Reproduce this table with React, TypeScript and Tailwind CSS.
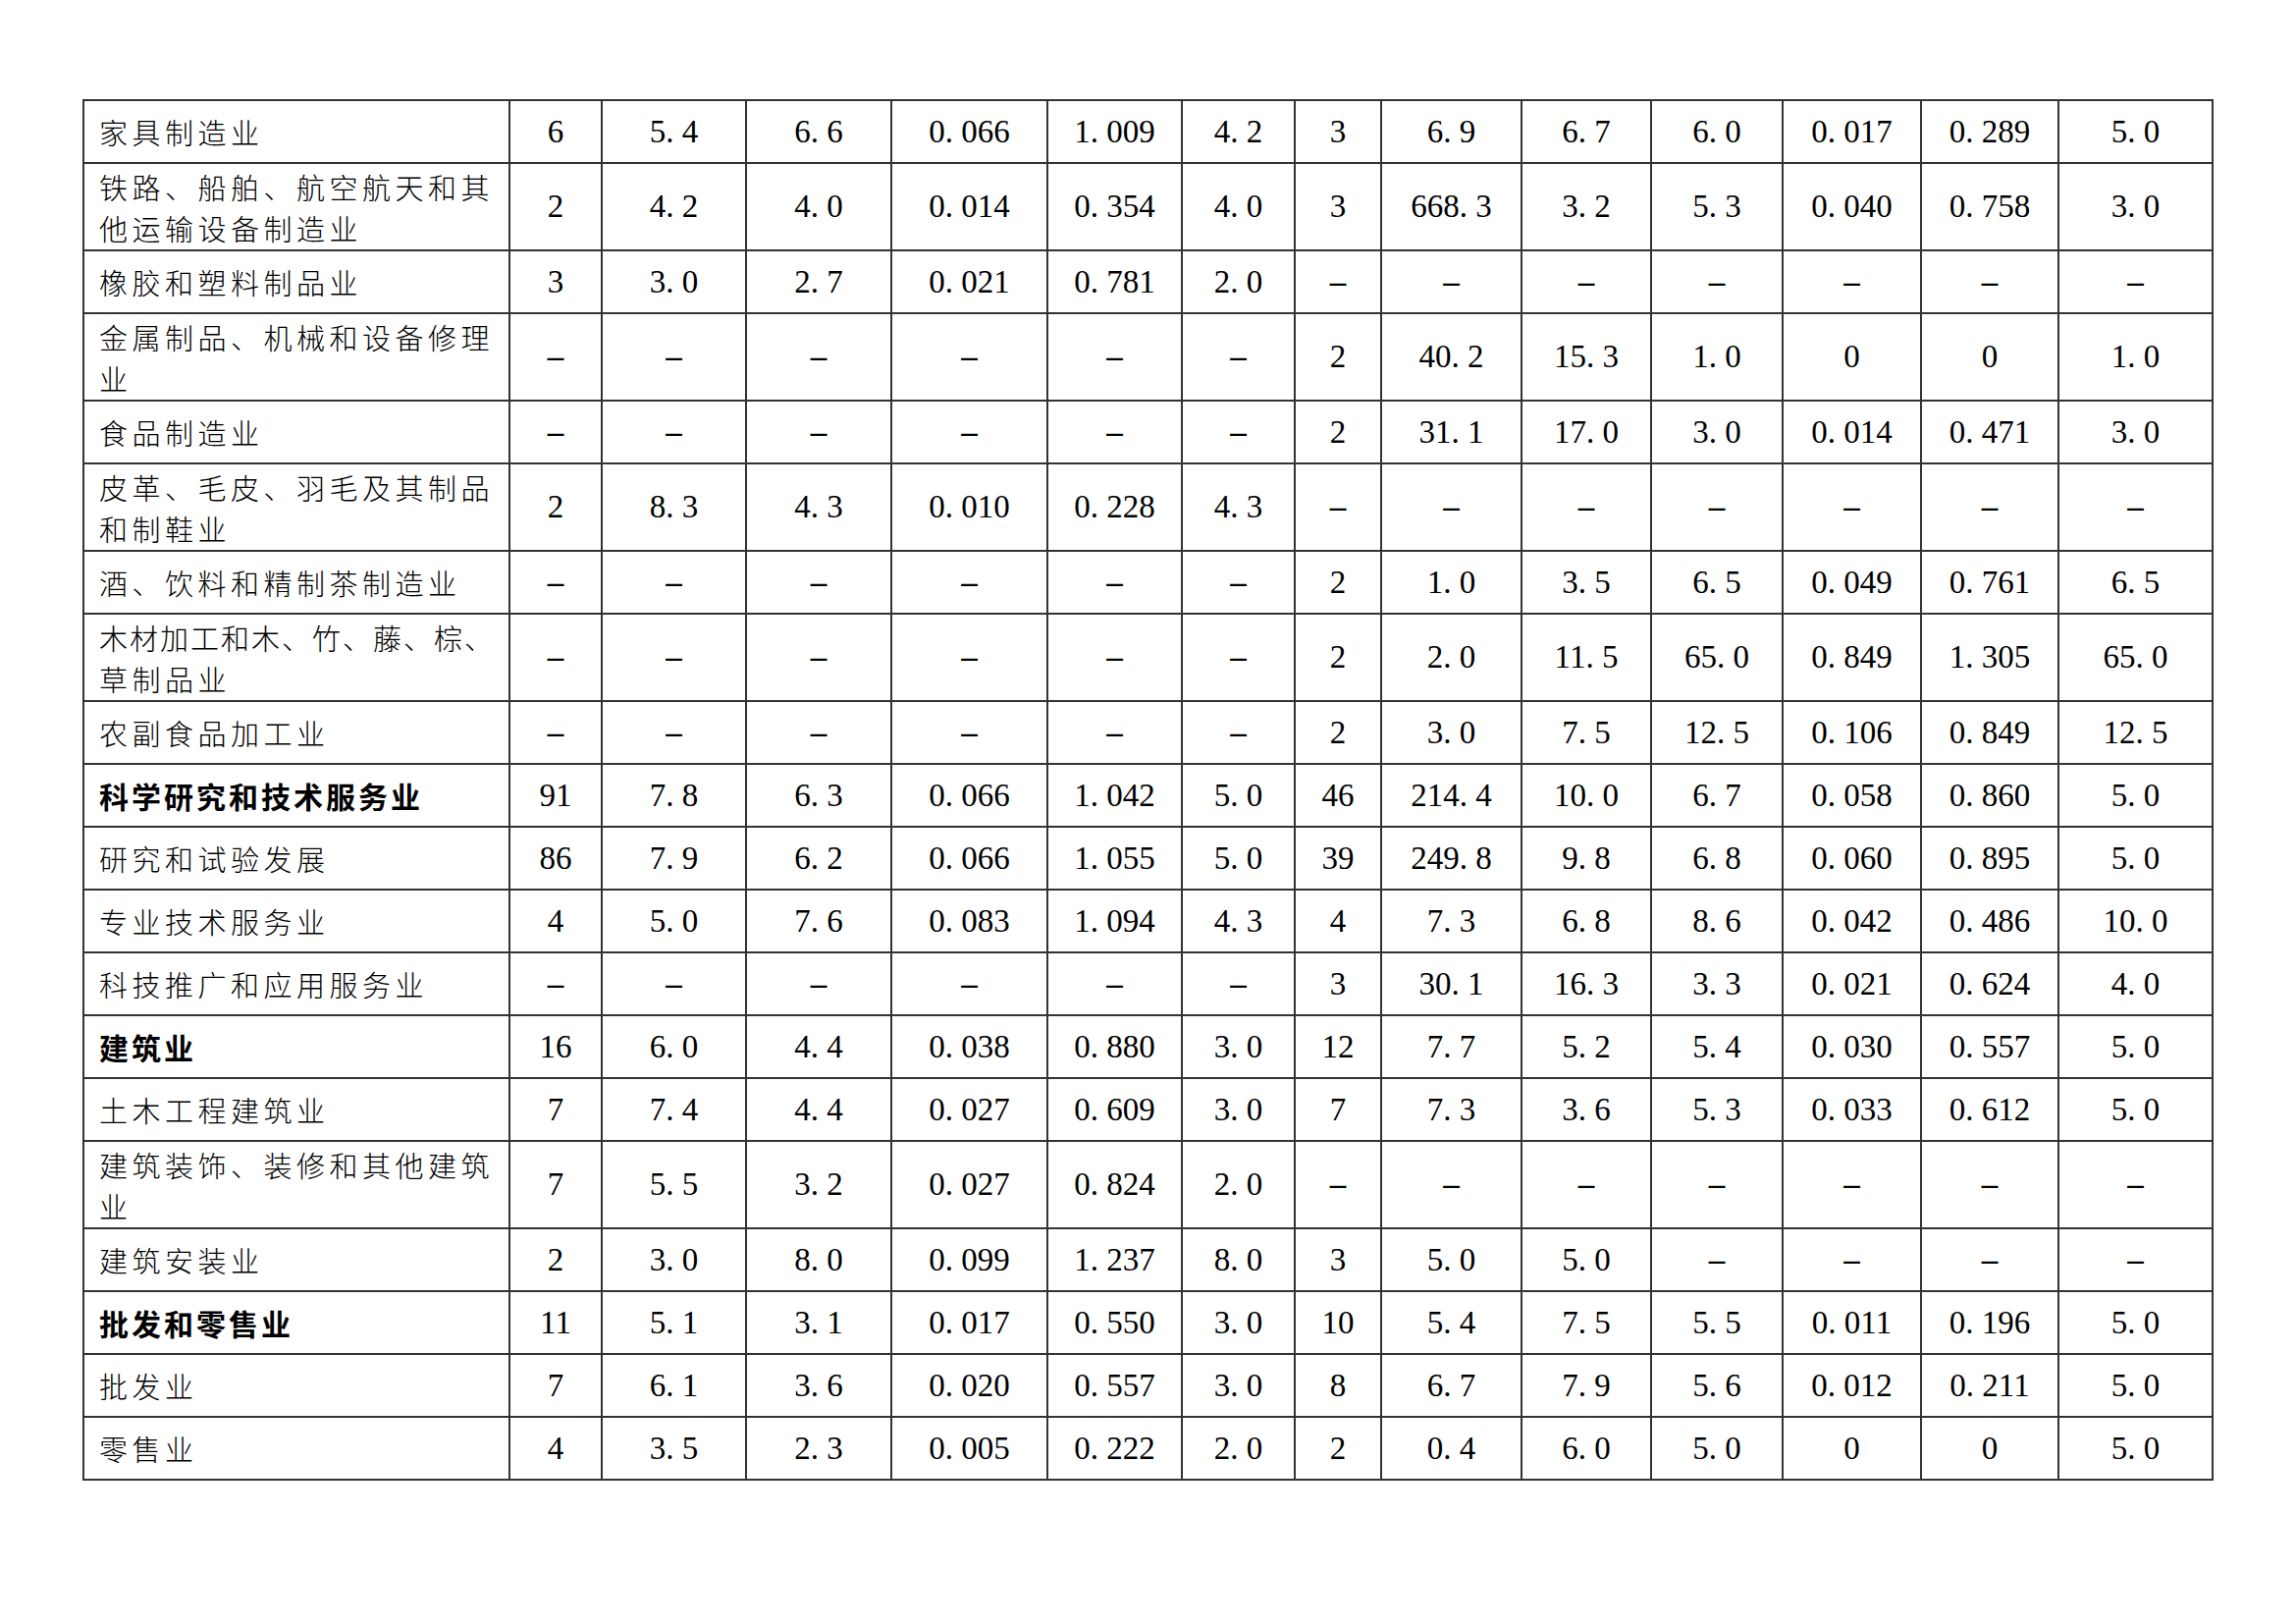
import React from "react";

type Row = {
  label: string[];
  bold?: boolean;
  tight?: boolean;
  values: string[];
};

const D = "-";

const rows: Row[] = [
  { label: ["家具制造业"], values: ["6", "5.4", "6.6", "0.066", "1.009", "4.2", "3", "6.9", "6.7", "6.0", "0.017", "0.289", "5.0"] },
  { label: ["铁路、船舶、航空航天和其", "他运输设备制造业"], values: ["2", "4.2", "4.0", "0.014", "0.354", "4.0", "3", "668.3", "3.2", "5.3", "0.040", "0.758", "3.0"] },
  { label: ["橡胶和塑料制品业"], values: ["3", "3.0", "2.7", "0.021", "0.781", "2.0", D, D, D, D, D, D, D] },
  { label: ["金属制品、机械和设备修理", "业"], values: [D, D, D, D, D, D, "2", "40.2", "15.3", "1.0", "0", "0", "1.0"] },
  { label: ["食品制造业"], values: [D, D, D, D, D, D, "2", "31.1", "17.0", "3.0", "0.014", "0.471", "3.0"] },
  { label: ["皮革、毛皮、羽毛及其制品", "和制鞋业"], values: ["2", "8.3", "4.3", "0.010", "0.228", "4.3", D, D, D, D, D, D, D] },
  { label: ["酒、饮料和精制茶制造业"], values: [D, D, D, D, D, D, "2", "1.0", "3.5", "6.5", "0.049", "0.761", "6.5"] },
  { label: ["木材加工和木、竹、藤、棕、", "草制品业"], tight: true, values: [D, D, D, D, D, D, "2", "2.0", "11.5", "65.0", "0.849", "1.305", "65.0"] },
  { label: ["农副食品加工业"], values: [D, D, D, D, D, D, "2", "3.0", "7.5", "12.5", "0.106", "0.849", "12.5"] },
  { label: ["科学研究和技术服务业"], bold: true, values: ["91", "7.8", "6.3", "0.066", "1.042", "5.0", "46", "214.4", "10.0", "6.7", "0.058", "0.860", "5.0"] },
  { label: ["研究和试验发展"], values: ["86", "7.9", "6.2", "0.066", "1.055", "5.0", "39", "249.8", "9.8", "6.8", "0.060", "0.895", "5.0"] },
  { label: ["专业技术服务业"], values: ["4", "5.0", "7.6", "0.083", "1.094", "4.3", "4", "7.3", "6.8", "8.6", "0.042", "0.486", "10.0"] },
  { label: ["科技推广和应用服务业"], values: [D, D, D, D, D, D, "3", "30.1", "16.3", "3.3", "0.021", "0.624", "4.0"] },
  { label: ["建筑业"], bold: true, values: ["16", "6.0", "4.4", "0.038", "0.880", "3.0", "12", "7.7", "5.2", "5.4", "0.030", "0.557", "5.0"] },
  { label: ["土木工程建筑业"], values: ["7", "7.4", "4.4", "0.027", "0.609", "3.0", "7", "7.3", "3.6", "5.3", "0.033", "0.612", "5.0"] },
  { label: ["建筑装饰、装修和其他建筑", "业"], values: ["7", "5.5", "3.2", "0.027", "0.824", "2.0", D, D, D, D, D, D, D] },
  { label: ["建筑安装业"], values: ["2", "3.0", "8.0", "0.099", "1.237", "8.0", "3", "5.0", "5.0", D, D, D, D] },
  { label: ["批发和零售业"], bold: true, values: ["11", "5.1", "3.1", "0.017", "0.550", "3.0", "10", "5.4", "7.5", "5.5", "0.011", "0.196", "5.0"] },
  { label: ["批发业"], values: ["7", "6.1", "3.6", "0.020", "0.557", "3.0", "8", "6.7", "7.9", "5.6", "0.012", "0.211", "5.0"] },
  { label: ["零售业"], values: ["4", "3.5", "2.3", "0.005", "0.222", "2.0", "2", "0.4", "6.0", "5.0", "0", "0", "5.0"] },
];

const colWidths = [
  "w-[434px]",
  "w-[94px]",
  "w-[147px]",
  "w-[148px]",
  "w-[159px]",
  "w-[137px]",
  "w-[115px]",
  "w-[88px]",
  "w-[143px]",
  "w-[132px]",
  "w-[134px]",
  "w-[141px]",
  "w-[140px]",
  "w-[157px]",
];

// numbers are set with a half-em wide period, like the 仿宋 figures in the source
const Num = ({ v }: { v: string }) => {
  if (v === D) return <span className="font-bold">–</span>;
  const [a, b] = v.split(".");
  if (b === undefined) return <>{a}</>;
  return (
    <>
      {a}
      <span className="inline-block w-[0.5em] text-left">.</span>
      {b}
    </>
  );
};

const App: React.FC = () => {
  return (
    <div className="min-h-screen bg-white pt-[101px] pl-[84px] text-black">
      <table className="table-fixed border-collapse">
        <colgroup>
          {colWidths.map((w, i) => (
            <col key={i} className={w} />
          ))}
        </colgroup>
        <tbody>
          {rows.map((r, i) => (
            <tr key={i} className={r.label.length > 1 ? "h-[89px]" : "h-[64px]"}>
              <td className="border-2 border-[#333] pl-[15px] pr-1 align-middle">
                {r.label.map((line, j) => (
                  <div
                    key={j}
                    className={
                      r.bold
                        ? "whitespace-nowrap font-['Noto_Sans_CJK_SC',sans-serif] text-[30px] font-bold tracking-[3px] leading-[42px]"
                        : r.tight && j === 0
                        ? "whitespace-nowrap font-['Noto_Sans_CJK_SC',sans-serif] text-[29px] font-light tracking-[2px] leading-[42px]"
                        : "whitespace-nowrap font-['Noto_Sans_CJK_SC',sans-serif] text-[29px] font-light tracking-[4.5px] leading-[42px]"
                    }
                  >
                    {line}
                  </div>
                ))}
              </td>
              {r.values.map((v, j) => (
                <td
                  key={j}
                  className="border-2 border-[#333] text-center align-middle whitespace-nowrap font-['Liberation_Serif',serif] text-[33px] leading-none"
                >
                  <Num v={v} />
                </td>
              ))}
            </tr>
          ))}
        </tbody>
      </table>
    </div>
  );
};

export default App;
